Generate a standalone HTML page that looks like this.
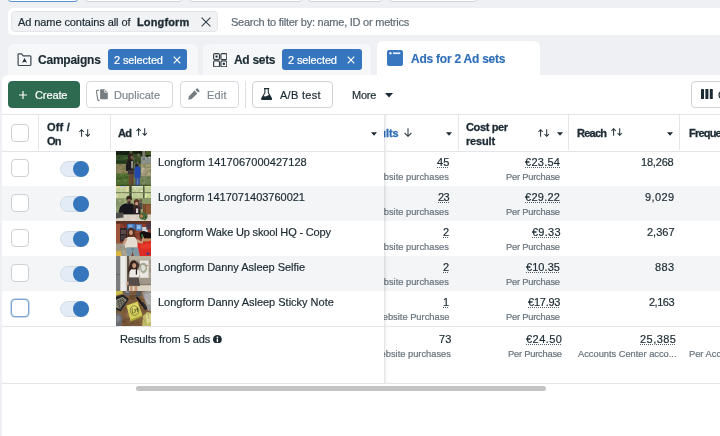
<!DOCTYPE html>
<html lang="en">
<head>
<meta charset="utf-8">
<title>Ads Manager</title>
<style>
*{box-sizing:border-box;margin:0;padding:0}
html,body{width:720px;height:436px;overflow:hidden}
body{position:relative;background:#eef0f4;font-family:"Liberation Sans",sans-serif;color:#1c2b33;font-size:11px}
.abs,svg{position:absolute}
.t{position:absolute;white-space:nowrap;line-height:1;z-index:5;-webkit-text-stroke:.2px currentColor;will-change:transform}
.du{text-decoration:underline dotted #55626b;text-decoration-thickness:1px;text-underline-offset:1px}
.topbtn{position:absolute;top:-21px;height:23px;background:#fff;border:1px solid #cfd3d8;border-radius:3px}
#fbar{left:8px;top:8px;width:730px;height:27px;background:#fff;border-radius:5px}
#chip{left:11px;top:11px;width:207px;height:21px;background:#f1f2f4;border:1px solid #e4e6ea;border-radius:4px}
.tab{position:absolute;top:44px;height:40px;border-radius:6px 6px 0 0;background:#f6f7f9}
.badge{position:absolute;top:49px;height:21px;background:#3676be;border-radius:3px}
#panel{left:2px;top:75px;width:730px;height:370px;background:#fff;border-radius:6px 0 0 0}
.btn{position:absolute;top:80.5px;height:27px;border-radius:4px;border:1px solid #d5d8dd;background:#fff}
.hl{position:absolute;height:1px;background:#e3e5e8;z-index:3}
.vl{position:absolute;width:1px;background:#e3e5e8}
.rowbg{position:absolute;left:2px;width:720px;height:35px;background:#f4f5f7}
.cb{position:absolute;left:11px;width:18px;height:18px;border:1px solid #cdd1d6;border-radius:4px;background:#fff;z-index:4}
.tg{position:absolute;left:60px;width:29px;height:16px;border-radius:8px;background:#e3ecf6;border:1px solid #d3dce6;z-index:4}
.tg i{position:absolute;right:-1px;top:-1px;width:16px;height:16px;border-radius:50%;background:#3576bc}
.th{position:absolute;left:116px;width:35px;height:35px;overflow:hidden;z-index:4}
#sticky{left:2px;top:115px;width:382px;height:268px;z-index:2}
#sticky div{position:absolute;left:0;width:382px}
#shadow{left:384px;top:115px;width:4px;height:268px;z-index:2;background:linear-gradient(90deg,rgba(0,0,0,.12),rgba(0,0,0,.05) 35%,rgba(0,0,0,0))}
.ic{z-index:5}
</style>
</head>
<body>
<div class="topbtn" style="left:8px;width:70px;border-color:#5b93d3"></div>
<div class="topbtn" style="left:85px;width:97px"></div>
<div class="topbtn" style="left:189px;width:113px"></div>
<div class="topbtn" style="left:308px;width:74px"></div>
<div class="topbtn" style="left:389px;width:88px"></div>

<div id="fbar" class="abs"></div>
<div id="chip" class="abs"></div>
<svg class="ic" style="left:201px;top:17px" width="10" height="10" viewBox="0 0 10 10"><path d="M.6 .6 L9.4 9.4 M9.4 .6 L.6 9.4" stroke="#303d45" stroke-width="1.05" fill="none"/></svg>

<div class="tab" style="left:8px;width:190px"></div>
<div class="tab" style="left:203px;width:168px"></div>
<div class="tab" style="left:377px;top:41px;width:163px;background:#fff"></div>
<div class="badge" style="left:107.5px;width:79.5px"></div>
<div class="badge" style="left:281.5px;width:80px"></div>
<!-- folder icon -->
<svg class="ic" style="left:17px;top:52.5px" width="15" height="14" viewBox="0 0 15 14"><path d="M1.9 .8 H4.6 L6.2 2.8 H13 Q13.9 2.8 13.9 3.7 V11.6 Q13.9 12.5 13 12.5 H2 Q1.1 12.5 1.1 11.6 V1.6 Q1.1 .8 1.9 .8Z" fill="none" stroke="#3b4850" stroke-width="1.2" stroke-linejoin="round"/><path d="M7.5 4.9 L10 9.8 L7.5 8.7 L5 9.8Z" fill="#1c2b33"/></svg>
<!-- badge x -->
<svg class="ic" style="left:172.6px;top:55.9px" width="8" height="8" viewBox="0 0 8 8"><path d="M.7 .7 L7.3 7.3 M7.3 .7 L.7 7.3" stroke="#fff" stroke-width="1.2"/></svg>
<svg class="ic" style="left:346.6px;top:55.9px" width="8" height="8" viewBox="0 0 8 8"><path d="M.7 .7 L7.3 7.3 M7.3 .7 L.7 7.3" stroke="#fff" stroke-width="1.2"/></svg>
<!-- ad sets icon -->
<svg class="ic" style="left:212.5px;top:53px" width="14.4" height="14.4" viewBox="0 0 14.4 14.4"><g fill="none" stroke="#333d44" stroke-width="1.15"><rect x=".6" y=".6" width="5.9" height="5.9" rx="1.3"/><rect x="7.9" y=".6" width="5.9" height="5.9" rx="1.3"/><rect x=".6" y="7.9" width="5.9" height="5.9" rx="1.3"/><rect x="7.9" y="7.9" width="5.9" height="5.9" rx="1.3"/></g><rect x="2.5" y="2.5" width="2.1" height="2.1" fill="#1c2b33"/><rect x="9.8" y="9.8" width="2.1" height="2.1" fill="#1c2b33"/></svg>
<!-- ads icon -->
<svg class="ic" style="left:387px;top:50px" width="16" height="16" viewBox="0 0 16 16"><rect width="16" height="16" rx="2" fill="#3877bf"/><rect x="2.4" y="2.2" width="2.1" height="2.1" fill="#fff"/><rect x="6" y="2.4" width="7.2" height="1.7" fill="#e4edf8"/></svg>

<div id="panel" class="abs"></div>

<!-- toolbar -->
<div class="btn" style="left:7.5px;width:72.5px;background:#2d6a4f;border-color:#2d6a4f"></div>
<svg class="ic" style="left:19px;top:90.5px" width="8" height="8" viewBox="0 0 8 8"><path d="M4 0 V8 M0 4 H8" stroke="#fff" stroke-width="1.2"/></svg>
<div class="btn" style="left:86.25px;width:86.5px"></div>
<svg class="ic" style="left:95.5px;top:88.8px" width="12" height="12" viewBox="0 0 12 12"><path d="M4.7 .3 H8.4 L11.8 3.6 V9.6 Q11.8 10.2 11.2 10.2 H4.7 Q4.1 10.2 4.1 9.6 V.9 Q4.1 .3 4.7 .3Z" fill="#757c82"/><path d="M8.7 .9 V3.3 H11.2" fill="none" stroke="#fff" stroke-width=".8"/><path d="M3 1.1 L.9 1.5 Q.3 1.7 .4 2.3 L1.8 10.8 Q2 11.5 2.7 11.4 L3.7 11.2" fill="none" stroke="#757c82" stroke-width="1.1"/></svg>
<div class="btn" style="left:180px;width:59px"></div>
<svg class="ic" style="left:188.4px;top:88.2px" width="12" height="12" viewBox="0 0 12 12"><path d="M.6 11.7 Q.2 11.7 .3 11.3 L.9 8.3 L6.6 2.6 L9.4 5.4 L3.7 11.1Z M7.4 1.8 L8.6 .6 Q9.1 .1 9.6 .6 L11.4 2.4 Q11.9 2.9 11.4 3.4 L10.2 4.6Z" fill="#757c82"/></svg>
<div class="vl" style="left:245px;top:81px;height:27px;background:#dcdfe3"></div>
<div class="btn" style="left:252px;width:81px;border-color:#cfd3d8"></div>
<svg class="ic" style="left:261px;top:88px" width="11.2" height="12.2" viewBox="0 0 11.2 12.2"><path d="M3 .6 H8.2 M3.9 .6 V4.7 L.8 10.3 Q.3 11.6 1.6 11.6 H9.6 Q10.9 11.6 10.4 10.3 L7.3 4.7 V.6" fill="none" stroke="#1c2b33" stroke-width="1.1" stroke-linejoin="round"/><path d="M2.3 7.9 L4.6 8.5 L8.4 6.7 L10.4 10.3 Q10.9 11.6 9.6 11.6 H1.6 Q.3 11.6 .8 10.3Z" fill="#1c2b33"/></svg>
<svg class="ic" style="left:385px;top:92.5px" width="8" height="5" viewBox="0 0 8 5"><path d="M0 0 H8 L4 4.6Z" fill="#1c2b33"/></svg>
<div class="btn" style="left:691px;width:60px;border-color:#cfd3d8"></div>
<svg class="ic" style="left:700.5px;top:89px" width="12" height="10" viewBox="0 0 12 10"><rect x="0" y="0" width="3" height="10" rx=".6" fill="#1c2b33"/><rect x="4.4" y="0" width="3" height="10" rx=".6" fill="#1c2b33"/><rect x="8.8" y="0" width="3" height="10" rx=".6" fill="#1c2b33"/></svg>

<!-- row backgrounds -->
<div class="rowbg" style="top:186px"></div>
<div class="rowbg" style="top:256px"></div>
<div class="hl" style="left:2px;top:114px;width:718px"></div>
<div class="hl" style="left:2px;top:150.5px;width:718px"></div>
<div class="hl" style="left:2px;top:326px;width:718px"></div>
<div class="hl" style="left:2px;top:383px;width:718px"></div>
<div class="vl" style="left:458px;top:115px;height:35px"></div>
<div class="vl" style="left:568px;top:115px;height:35px"></div>
<div class="vl" style="left:679px;top:115px;height:35px"></div>

<!-- sticky column overlay -->
<div id="sticky" class="abs">
<div style="top:0;height:35px;background:#fff"></div>
<div style="top:36px;height:35px;background:#fff"></div>
<div style="top:71px;height:35px;background:#f4f5f7"></div>
<div style="top:106px;height:35px;background:#fff"></div>
<div style="top:141px;height:35px;background:#f4f5f7"></div>
<div style="top:176px;height:35px;background:#fff"></div>
<div style="top:211px;height:57px;background:#fff"></div>
</div>
<div id="shadow" class="abs"></div>
<div class="vl" style="left:38px;top:115px;height:35px;z-index:4"></div>
<div class="vl" style="left:110px;top:115px;height:35px;z-index:4"></div>

<!-- header icons -->
<svg class="ic" style="left:78.9px;top:128.8px" width="11.4" height="8" viewBox="0 0 11.4 8"><path d="M2.6 7.7 V.7 M.4 3 L2.6 .7 L4.8 3 M8.7 .3 V7.3 M6.5 5 L8.7 7.3 L10.9 5" fill="none" stroke="#26343c" stroke-width="1.05"/></svg>
<svg class="ic" style="left:135.6px;top:128.2px" width="11.4" height="8" viewBox="0 0 11.4 8"><path d="M2.6 7.7 V.7 M.4 3 L2.6 .7 L4.8 3 M8.7 .3 V7.3 M6.5 5 L8.7 7.3 L10.9 5" fill="none" stroke="#26343c" stroke-width="1.05"/></svg>
<svg class="ic" style="left:538px;top:128.8px" width="11.4" height="8" viewBox="0 0 11.4 8"><path d="M2.6 7.7 V.7 M.4 3 L2.6 .7 L4.8 3 M8.7 .3 V7.3 M6.5 5 L8.7 7.3 L10.9 5" fill="none" stroke="#26343c" stroke-width="1.05"/></svg>
<svg class="ic" style="left:611.4px;top:128.2px" width="11.4" height="8" viewBox="0 0 11.4 8"><path d="M2.6 7.7 V.7 M.4 3 L2.6 .7 L4.8 3 M8.7 .3 V7.3 M6.5 5 L8.7 7.3 L10.9 5" fill="none" stroke="#26343c" stroke-width="1.05"/></svg>
<svg class="ic" style="left:371.2px;top:131.6px" width="6" height="4" viewBox="0 0 6 4"><path d="M0 .2 H6 L3 3.8Z" fill="#1c2b33"/></svg>
<svg class="ic" style="left:445.9px;top:131.6px" width="6" height="4" viewBox="0 0 6 4"><path d="M0 .2 H6 L3 3.8Z" fill="#1c2b33"/></svg>
<svg class="ic" style="left:556.7px;top:131.6px" width="6" height="4" viewBox="0 0 6 4"><path d="M0 .2 H6 L3 3.8Z" fill="#1c2b33"/></svg>
<svg class="ic" style="left:667.4px;top:131.6px" width="6" height="4" viewBox="0 0 6 4"><path d="M0 .2 H6 L3 3.8Z" fill="#1c2b33"/></svg>
<svg class="ic" style="left:404px;top:128px" width="8" height="9" viewBox="0 0 8 9"><path d="M4 .3 V8.3 M.6 5 L4 8.3 L7.4 5" fill="none" stroke="#36434b" stroke-width="1.1"/></svg>
<svg class="ic" style="left:213.2px;top:334.6px" width="8.8" height="8.8" viewBox="0 0 10 10"><circle cx="5" cy="5" r="5" fill="#1c2b33"/><rect x="4.2" y="4.2" width="1.6" height="3.8" fill="#fff"/><circle cx="5" cy="2.6" r="1" fill="#fff"/></svg>
<div class="cb" style="top:124px"></div>

<div class="cb" style="top:159px"></div>
<div class="tg" style="top:161px"><i></i></div>
<div class="th" style="top:151px"><svg width="35" height="35" viewBox="0 0 35 35" style="left:0;top:0"><defs><filter id="bl1" x="-10%" y="-10%" width="120%" height="120%"><feGaussianBlur stdDeviation="0.6"/></filter></defs><g filter="url(#bl1)"><rect x="-2" y="-2" width="39" height="39" fill="#56633c"/><rect x="-2" y="-2" width="39" height="7" fill="#182012"/><ellipse cx="4.7" cy="4.2" rx="1.3" ry="0.8" fill="#2e3c1e"/><ellipse cx="26.6" cy="2.4" rx="0.9" ry="0.7" fill="#2e3c1e"/><ellipse cx="1.0" cy="4.2" rx="0.9" ry="1.3" fill="#141a0e"/><ellipse cx="24.4" cy="1.3" rx="1.3" ry="1.1" fill="#141a0e"/><ellipse cx="31.5" cy="0.2" rx="0.5" ry="1.0" fill="#2e3c1e"/><ellipse cx="24.0" cy="4.8" rx="1.2" ry="1.0" fill="#2e3c1e"/><ellipse cx="32.9" cy="2.8" rx="0.8" ry="1.2" fill="#2e3c1e"/><ellipse cx="33.3" cy="4.6" rx="0.9" ry="1.4" fill="#141a0e"/><ellipse cx="6.5" cy="5.0" rx="1.4" ry="0.6" fill="#10150c"/><ellipse cx="31.3" cy="4.9" rx="1.0" ry="1.5" fill="#1c2614"/><ellipse cx="29.1" cy="3.4" rx="0.8" ry="1.1" fill="#2e3c1e"/><ellipse cx="29.6" cy="2.5" rx="1.1" ry="0.5" fill="#26341a"/><ellipse cx="26.0" cy="2.0" rx="1.2" ry="0.9" fill="#10150c"/><ellipse cx="3.0" cy="3.3" rx="0.6" ry="0.7" fill="#2e3c1e"/><ellipse cx="13.0" cy="3.7" rx="1.0" ry="0.8" fill="#1c2614"/><ellipse cx="20.8" cy="2.0" rx="0.7" ry="1.0" fill="#141a0e"/><ellipse cx="27.0" cy="2.7" rx="1.4" ry="0.7" fill="#1c2614"/><ellipse cx="12.0" cy="4.2" rx="0.9" ry="1.4" fill="#1c2614"/><ellipse cx="21.3" cy="3.6" rx="0.9" ry="1.4" fill="#1c2614"/><ellipse cx="28.3" cy="2.6" rx="1.1" ry="0.9" fill="#141a0e"/><ellipse cx="16.8" cy="1.8" rx="1.1" ry="1.4" fill="#2e3c1e"/><ellipse cx="17.0" cy="1.8" rx="0.8" ry="1.0" fill="#1c2614"/><rect x="13.6" y="0" width="2.6" height="3.4" fill="#4e6234"/><rect x="26.2" y="0" width="3.2" height="6" fill="#7e7a6a"/><rect x="30" y="0" width="5" height="4" fill="#465a2c"/><rect x="0" y="4" width="12" height="9" fill="#34502a"/><ellipse cx="11.5" cy="12.5" rx="0.6" ry="0.6" fill="#42602e"/><ellipse cx="8.8" cy="10.0" rx="0.8" ry="1.1" fill="#385428"/><ellipse cx="0.4" cy="10.1" rx="1.5" ry="1.1" fill="#385428"/><ellipse cx="11.4" cy="8.9" rx="0.9" ry="0.8" fill="#2c4622"/><ellipse cx="10.5" cy="7.3" rx="1.4" ry="1.4" fill="#4a6a34"/><ellipse cx="10.7" cy="8.7" rx="1.1" ry="0.7" fill="#2c4622"/><ellipse cx="2.1" cy="5.6" rx="1.0" ry="0.9" fill="#385428"/><ellipse cx="8.1" cy="5.6" rx="1.4" ry="1.3" fill="#385428"/><ellipse cx="10.9" cy="10.9" rx="1.3" ry="0.9" fill="#4a6a34"/><ellipse cx="1.9" cy="10.8" rx="1.2" ry="1.0" fill="#385428"/><ellipse cx="3.0" cy="6.5" rx="1.0" ry="1.0" fill="#26401e"/><ellipse cx="7.9" cy="8.1" rx="1.4" ry="0.9" fill="#385428"/><ellipse cx="8.7" cy="8.4" rx="0.7" ry="0.8" fill="#42602e"/><ellipse cx="10.5" cy="9.5" rx="1.3" ry="1.0" fill="#26401e"/><ellipse cx="11.5" cy="10.4" rx="1.0" ry="1.0" fill="#385428"/><ellipse cx="7.1" cy="6.8" rx="0.7" ry="1.0" fill="#385428"/><ellipse cx="10.6" cy="11.1" rx="0.8" ry="0.5" fill="#42602e"/><ellipse cx="12.0" cy="5.0" rx="1.1" ry="0.5" fill="#385428"/><ellipse cx="2.7" cy="11.9" rx="0.6" ry="1.0" fill="#26401e"/><ellipse cx="2.9" cy="5.9" rx="1.4" ry="0.9" fill="#2c4622"/><rect x="0" y="9.4" width="10.5" height="3" fill="#243a1c"/><rect x="17" y="3" width="8" height="10" fill="#3e4e2c"/><ellipse cx="18.9" cy="8.4" rx="0.9" ry="1.1" fill="#34442a"/><ellipse cx="21.8" cy="12.1" rx="1.0" ry="1.1" fill="#4e5e38"/><ellipse cx="25.0" cy="7.7" rx="1.3" ry="1.0" fill="#4e5e38"/><ellipse cx="18.9" cy="4.5" rx="1.4" ry="0.9" fill="#34442a"/><ellipse cx="22.4" cy="3.6" rx="1.3" ry="1.1" fill="#5e6a48"/><ellipse cx="23.2" cy="11.2" rx="0.8" ry="1.1" fill="#28361e"/><ellipse cx="22.7" cy="12.2" rx="0.9" ry="1.3" fill="#28361e"/><ellipse cx="24.7" cy="4.3" rx="0.9" ry="0.5" fill="#28361e"/><ellipse cx="18.7" cy="12.7" rx="0.9" ry="1.1" fill="#5e6a48"/><ellipse cx="20.4" cy="11.3" rx="1.1" ry="1.0" fill="#28361e"/><ellipse cx="21.7" cy="12.0" rx="1.2" ry="1.4" fill="#5e6a48"/><ellipse cx="24.9" cy="9.7" rx="0.7" ry="1.4" fill="#34442a"/><ellipse cx="22.7" cy="5.1" rx="1.3" ry="1.1" fill="#5e6a48"/><ellipse cx="18.0" cy="7.8" rx="1.1" ry="1.0" fill="#5e6a48"/><rect x="25" y="6" width="10.5" height="6.6" fill="#878e8c"/><ellipse cx="27.7" cy="7.1" rx="0.9" ry="0.7" fill="#a2a6a6"/><ellipse cx="25.7" cy="9.5" rx="0.8" ry="1.5" fill="#a2a6a6"/><ellipse cx="27.6" cy="9.5" rx="0.8" ry="0.7" fill="#a2a6a6"/><ellipse cx="28.0" cy="11.7" rx="0.5" ry="1.1" fill="#b2b6b6"/><ellipse cx="33.1" cy="7.6" rx="0.8" ry="1.1" fill="#b2b6b6"/><ellipse cx="26.3" cy="9.8" rx="1.2" ry="1.0" fill="#767e7c"/><ellipse cx="27.8" cy="8.0" rx="1.4" ry="1.3" fill="#6a726e"/><ellipse cx="33.5" cy="6.5" rx="0.8" ry="1.2" fill="#b2b6b6"/><ellipse cx="33.6" cy="9.3" rx="0.9" ry="1.1" fill="#8a9088"/><ellipse cx="29.8" cy="7.8" rx="0.8" ry="1.3" fill="#a2a6a6"/><ellipse cx="25.9" cy="9.9" rx="0.8" ry="1.0" fill="#8a9088"/><ellipse cx="32.2" cy="7.3" rx="1.2" ry="0.6" fill="#767e7c"/><rect x="0" y="13" width="12" height="9.6" fill="#84805a"/><ellipse cx="7.5" cy="20.1" rx="1.3" ry="1.4" fill="#a08a60"/><ellipse cx="7.8" cy="18.1" rx="1.3" ry="1.3" fill="#747448"/><ellipse cx="7.8" cy="21.6" rx="0.6" ry="1.0" fill="#747448"/><ellipse cx="4.6" cy="14.0" rx="0.7" ry="1.2" fill="#8a6a46"/><ellipse cx="3.4" cy="21.8" rx="1.3" ry="0.7" fill="#94845c"/><ellipse cx="1.7" cy="18.9" rx="0.6" ry="0.5" fill="#94845c"/><ellipse cx="2.5" cy="15.1" rx="1.5" ry="1.4" fill="#9a8a66"/><ellipse cx="3.8" cy="14.9" rx="1.4" ry="1.1" fill="#747448"/><ellipse cx="11.3" cy="19.6" rx="1.5" ry="1.4" fill="#9a8a66"/><ellipse cx="0.3" cy="17.0" rx="1.4" ry="0.8" fill="#9a8a66"/><ellipse cx="3.6" cy="18.8" rx="0.5" ry="1.2" fill="#9a8a66"/><ellipse cx="0.8" cy="16.4" rx="0.8" ry="1.2" fill="#747448"/><ellipse cx="5.8" cy="19.8" rx="0.6" ry="1.5" fill="#94845c"/><ellipse cx="11.4" cy="16.4" rx="0.9" ry="1.0" fill="#8a6a46"/><ellipse cx="4.4" cy="18.6" rx="0.5" ry="0.5" fill="#747448"/><ellipse cx="7.5" cy="22.2" rx="0.6" ry="0.7" fill="#8a6a46"/><ellipse cx="4.1" cy="16.4" rx="1.0" ry="1.3" fill="#94845c"/><ellipse cx="7.1" cy="20.5" rx="0.9" ry="0.8" fill="#8a6a46"/><ellipse cx="11.3" cy="13.9" rx="0.8" ry="1.1" fill="#747448"/><ellipse cx="4.1" cy="21.9" rx="1.0" ry="0.8" fill="#9a8a66"/><ellipse cx="3.7" cy="20.7" rx="1.1" ry="1.2" fill="#9a8a66"/><ellipse cx="12.0" cy="14.6" rx="0.5" ry="1.5" fill="#6a7440"/><ellipse cx="11.1" cy="13.3" rx="1.2" ry="0.8" fill="#9a8a66"/><ellipse cx="5.5" cy="17.0" rx="0.6" ry="1.4" fill="#94845c"/><rect x="24" y="12.6" width="12" height="13" fill="#a09a7a"/><ellipse cx="33.5" cy="23.3" rx="1.0" ry="0.8" fill="#b2aa8a"/><ellipse cx="25.7" cy="20.2" rx="1.5" ry="1.2" fill="#beb698"/><ellipse cx="33.2" cy="16.1" rx="1.3" ry="1.2" fill="#888a5e"/><ellipse cx="34.9" cy="19.6" rx="0.6" ry="1.1" fill="#7e8458"/><ellipse cx="33.7" cy="16.1" rx="1.3" ry="1.2" fill="#888a5e"/><ellipse cx="28.0" cy="13.8" rx="1.3" ry="1.3" fill="#888a5e"/><ellipse cx="32.4" cy="22.4" rx="1.2" ry="1.3" fill="#b2aa8a"/><ellipse cx="35.4" cy="20.3" rx="0.7" ry="1.2" fill="#beb698"/><ellipse cx="29.8" cy="23.4" rx="0.7" ry="1.1" fill="#7e8458"/><ellipse cx="34.7" cy="19.1" rx="1.4" ry="1.1" fill="#94906a"/><ellipse cx="31.2" cy="16.6" rx="1.1" ry="0.6" fill="#7e8458"/><ellipse cx="30.3" cy="14.1" rx="1.2" ry="0.8" fill="#94906a"/><ellipse cx="28.6" cy="15.5" rx="1.1" ry="1.3" fill="#7e8458"/><ellipse cx="30.3" cy="15.1" rx="0.7" ry="1.1" fill="#aaa280"/><ellipse cx="34.9" cy="20.7" rx="0.8" ry="0.9" fill="#888a5e"/><ellipse cx="27.5" cy="21.4" rx="1.0" ry="0.7" fill="#aaa280"/><ellipse cx="33.0" cy="17.8" rx="1.5" ry="0.7" fill="#b2aa8a"/><ellipse cx="34.7" cy="21.3" rx="1.4" ry="0.9" fill="#888a5e"/><ellipse cx="33.6" cy="19.3" rx="1.0" ry="1.2" fill="#888a5e"/><ellipse cx="35.3" cy="15.1" rx="1.2" ry="1.0" fill="#7e8458"/><ellipse cx="33.4" cy="14.8" rx="0.5" ry="0.6" fill="#aaa280"/><ellipse cx="33.6" cy="15.0" rx="1.0" ry="0.8" fill="#aaa280"/><ellipse cx="27.1" cy="17.9" rx="1.4" ry="1.1" fill="#beb698"/><ellipse cx="31.2" cy="21.1" rx="1.0" ry="1.2" fill="#888a5e"/><rect x="0" y="22.6" width="13" height="12.4" fill="#506c30"/><ellipse cx="4.2" cy="24.5" rx="1.2" ry="0.6" fill="#6a8844"/><ellipse cx="1.2" cy="29.8" rx="1.4" ry="0.7" fill="#46622a"/><ellipse cx="5.6" cy="23.5" rx="0.6" ry="0.9" fill="#6a8844"/><ellipse cx="1.6" cy="25.4" rx="1.1" ry="1.4" fill="#6a8844"/><ellipse cx="7.6" cy="23.2" rx="0.7" ry="1.1" fill="#5e7e3a"/><ellipse cx="3.8" cy="24.4" rx="0.6" ry="0.8" fill="#405c28"/><ellipse cx="2.3" cy="29.8" rx="1.1" ry="0.9" fill="#6a8844"/><ellipse cx="9.3" cy="29.6" rx="1.1" ry="1.0" fill="#6a8844"/><ellipse cx="5.6" cy="26.5" rx="1.1" ry="1.0" fill="#527234"/><ellipse cx="3.2" cy="24.8" rx="1.3" ry="0.6" fill="#527234"/><ellipse cx="6.8" cy="33.5" rx="1.2" ry="0.8" fill="#46622a"/><ellipse cx="1.5" cy="27.8" rx="1.3" ry="0.7" fill="#3c5826"/><ellipse cx="5.5" cy="34.5" rx="0.6" ry="1.1" fill="#527234"/><ellipse cx="4.4" cy="26.9" rx="1.0" ry="1.3" fill="#46622a"/><ellipse cx="10.9" cy="34.3" rx="1.0" ry="1.2" fill="#46622a"/><ellipse cx="9.5" cy="26.4" rx="1.1" ry="1.2" fill="#3c5826"/><ellipse cx="3.7" cy="27.4" rx="1.2" ry="0.5" fill="#3c5826"/><ellipse cx="4.6" cy="30.2" rx="1.0" ry="0.7" fill="#527234"/><ellipse cx="1.7" cy="25.7" rx="0.9" ry="1.4" fill="#46622a"/><ellipse cx="2.2" cy="27.6" rx="0.8" ry="0.6" fill="#3c5826"/><ellipse cx="11.2" cy="26.1" rx="0.9" ry="0.9" fill="#3c5826"/><ellipse cx="12.5" cy="24.5" rx="0.7" ry="0.7" fill="#5e7e3a"/><ellipse cx="0.2" cy="32.9" rx="0.7" ry="0.8" fill="#5e7e3a"/><ellipse cx="5.4" cy="27.2" rx="1.1" ry="1.5" fill="#405c28"/><rect x="17" y="13" width="8" height="22" fill="#606c44"/><ellipse cx="20.7" cy="21.2" rx="0.6" ry="1.4" fill="#56623c"/><ellipse cx="19.7" cy="23.2" rx="1.1" ry="0.8" fill="#4e5a36"/><ellipse cx="22.6" cy="29.0" rx="0.7" ry="1.4" fill="#4e5a36"/><ellipse cx="20.4" cy="16.7" rx="0.6" ry="0.6" fill="#4e5a36"/><ellipse cx="17.5" cy="28.1" rx="1.3" ry="1.4" fill="#6a764c"/><ellipse cx="18.6" cy="17.9" rx="1.3" ry="1.4" fill="#6a764c"/><ellipse cx="24.3" cy="21.7" rx="0.8" ry="0.5" fill="#4e5a36"/><ellipse cx="24.1" cy="32.3" rx="0.6" ry="0.9" fill="#6a764c"/><ellipse cx="18.1" cy="18.2" rx="1.2" ry="1.4" fill="#4e5a36"/><ellipse cx="17.0" cy="29.8" rx="0.7" ry="1.4" fill="#6a764c"/><rect x="24" y="25.6" width="12" height="9.4" fill="#6e7e54"/><ellipse cx="26.7" cy="34.6" rx="0.6" ry="1.2" fill="#62744a"/><ellipse cx="25.6" cy="33.2" rx="1.0" ry="0.9" fill="#62744a"/><ellipse cx="29.5" cy="29.9" rx="1.0" ry="0.7" fill="#8a9870"/><ellipse cx="25.1" cy="27.8" rx="0.5" ry="0.8" fill="#8a9870"/><ellipse cx="29.7" cy="34.2" rx="1.2" ry="1.2" fill="#62744a"/><ellipse cx="35.9" cy="26.2" rx="1.1" ry="0.9" fill="#62744a"/><ellipse cx="28.1" cy="32.1" rx="1.0" ry="1.1" fill="#7e8c64"/><ellipse cx="31.0" cy="26.9" rx="0.6" ry="1.4" fill="#8a9870"/><ellipse cx="32.4" cy="27.0" rx="1.4" ry="1.0" fill="#5a6c44"/><ellipse cx="34.6" cy="28.3" rx="0.9" ry="1.4" fill="#7e8c64"/><ellipse cx="25.9" cy="31.3" rx="1.0" ry="0.8" fill="#728252"/><ellipse cx="35.4" cy="33.5" rx="1.0" ry="0.7" fill="#7e8c64"/><ellipse cx="28.3" cy="28.3" rx="1.2" ry="1.3" fill="#5a6c44"/><ellipse cx="35.0" cy="30.7" rx="0.8" ry="1.4" fill="#728252"/><ellipse cx="28.1" cy="28.1" rx="0.9" ry="0.9" fill="#8a9870"/><ellipse cx="26.1" cy="29.3" rx="0.7" ry="1.2" fill="#62744a"/><ellipse cx="26.4" cy="32.8" rx="0.8" ry="0.5" fill="#8a9870"/><ellipse cx="28.1" cy="27.2" rx="0.9" ry="0.7" fill="#8a9870"/><ellipse cx="14.4" cy="5.8" rx="2.6" ry="3.5" fill="#2e211a"/><path d="M12 6 Q11 10 12 13 L14 9Z" fill="#2e211a"/><ellipse cx="15.9" cy="6.2" rx="1.1" ry="1.7" fill="#86604c"/><path d="M10 20 Q9.2 11.4 12.4 9 H16.8 Q17.8 12 17.4 20Z" fill="#1f1d1a"/><rect x="15.3" y="10" width="1.5" height="7.4" fill="#b4b0ac"/><path d="M11.8 19 H17.8 L18 23.4 H12Z" fill="#3e3436"/><rect x="12.8" y="23" width="2" height="11" fill="#6e4a32"/><rect x="15.4" y="23" width="1.9" height="11" fill="#60402a"/><ellipse cx="20.8" cy="14.4" rx="1.8" ry="1.7" fill="#261c2a"/><path d="M18.6 27 V17.4 Q18.8 15.6 20.6 15.6 H22.6 Q24.4 15.8 24.4 17.6 V27Z" fill="#2247ae"/><rect x="19.6" y="26.6" width="4.2" height="8" fill="#3a58a0"/><rect x="21.4" y="28.4" width=".7" height="6" fill="#7e94c0"/><rect x="-1" y="33.8" width="37" height="2.2" fill="#2e3a20" opacity=".6"/></g></svg></div>
<div class="cb" style="top:194px"></div>
<div class="tg" style="top:196px"><i></i></div>
<div class="th" style="top:186px"><svg width="35" height="35" viewBox="0 0 35 35" style="left:0;top:0"><defs><filter id="bl2" x="-10%" y="-10%" width="120%" height="120%"><feGaussianBlur stdDeviation="0.6"/></filter></defs><g filter="url(#bl2)"><rect x="-2" y="-2" width="39" height="39" fill="#98a672"/><rect x="0" y="0" width="35" height="12" fill="#bfcc96"/><ellipse cx="5.9" cy="6.6" rx="1.4" ry="1.0" fill="#e6e2c0"/><ellipse cx="11.1" cy="2.9" rx="1.3" ry="1.0" fill="#e6e2c0"/><ellipse cx="10.3" cy="1.9" rx="0.8" ry="0.6" fill="#d4c890"/><ellipse cx="8.2" cy="7.0" rx="0.9" ry="1.0" fill="#d4c890"/><ellipse cx="8.0" cy="2.6" rx="0.5" ry="1.0" fill="#d8d8a6"/><ellipse cx="0.5" cy="9.8" rx="1.1" ry="1.3" fill="#e2dcae"/><ellipse cx="5.7" cy="9.4" rx="1.0" ry="1.1" fill="#c4d090"/><ellipse cx="0.1" cy="1.8" rx="1.2" ry="0.9" fill="#e6e2c0"/><ellipse cx="12.9" cy="9.4" rx="1.2" ry="0.8" fill="#b4c884"/><ellipse cx="6.7" cy="1.3" rx="1.1" ry="0.6" fill="#d8d8a6"/><ellipse cx="11.0" cy="4.9" rx="1.5" ry="1.3" fill="#d8d8a6"/><ellipse cx="2.8" cy="10.3" rx="0.6" ry="0.9" fill="#d4c890"/><ellipse cx="5.2" cy="1.7" rx="1.1" ry="1.3" fill="#e2dcae"/><ellipse cx="4.4" cy="4.1" rx="0.5" ry="0.9" fill="#d8d8a6"/><ellipse cx="1.7" cy="8.1" rx="0.5" ry="1.0" fill="#c4d090"/><ellipse cx="2.3" cy="6.6" rx="0.9" ry="0.7" fill="#d4c890"/><ellipse cx="20.7" cy="6.9" rx="1.2" ry="0.6" fill="#e0e8d0"/><ellipse cx="26.0" cy="5.3" rx="1.1" ry="1.0" fill="#d0dcae"/><ellipse cx="21.6" cy="7.0" rx="0.6" ry="0.9" fill="#d0dcae"/><ellipse cx="19.4" cy="2.9" rx="1.1" ry="0.7" fill="#eceee0"/><ellipse cx="22.8" cy="8.2" rx="0.6" ry="1.4" fill="#d0dcae"/><ellipse cx="16.9" cy="9.9" rx="1.4" ry="0.6" fill="#c0d09a"/><ellipse cx="25.7" cy="5.9" rx="1.4" ry="1.1" fill="#e0e8d0"/><ellipse cx="21.6" cy="5.6" rx="0.6" ry="1.1" fill="#c0d09a"/><ellipse cx="20.8" cy="4.5" rx="0.5" ry="1.2" fill="#d0dcae"/><ellipse cx="25.8" cy="7.0" rx="0.9" ry="0.9" fill="#c0d09a"/><ellipse cx="22.7" cy="2.0" rx="0.7" ry="0.9" fill="#d0dcae"/><ellipse cx="16.3" cy="8.4" rx="0.9" ry="1.0" fill="#d0dcae"/><ellipse cx="30.6" cy="9.5" rx="1.2" ry="1.3" fill="#dce6a8"/><ellipse cx="32.9" cy="9.3" rx="1.4" ry="1.1" fill="#dce6a8"/><ellipse cx="29.8" cy="7.8" rx="0.7" ry="0.8" fill="#e4eab8"/><ellipse cx="29.8" cy="9.5" rx="1.5" ry="1.5" fill="#dce6a8"/><ellipse cx="29.5" cy="10.7" rx="1.4" ry="0.8" fill="#e4eab8"/><ellipse cx="33.5" cy="12.4" rx="1.3" ry="0.8" fill="#dce6a8"/><ellipse cx="31.9" cy="10.3" rx="1.1" ry="0.9" fill="#b8cc78"/><ellipse cx="34.3" cy="9.0" rx="1.2" ry="0.8" fill="#b8cc78"/><rect x="13.3" y="0" width="2.4" height="14" fill="#434a32"/><rect x="27" y="0" width="1.6" height="16" fill="#566040"/><rect x="0" y="-1" width="13" height="2.6" fill="#e6d894"/><rect x="4" y="-1" width="6" height="2.2" fill="#a8c8e0"/><rect x="16" y="-1" width="11" height="2.4" fill="#dfe6cc"/><rect x="28.6" y="-1" width="7" height="2.4" fill="#cfdc98"/><rect x="0" y="6.2" width="35" height=".9" fill="#6a7650"/><rect x="0" y="13" width="8" height="14" fill="#869668"/><ellipse cx="0.9" cy="22.8" rx="1.2" ry="1.4" fill="#a4b084"/><ellipse cx="5.9" cy="17.1" rx="0.6" ry="0.9" fill="#6c7a52"/><ellipse cx="5.5" cy="18.6" rx="1.3" ry="0.6" fill="#94a474"/><ellipse cx="7.0" cy="17.4" rx="1.3" ry="0.9" fill="#94a474"/><ellipse cx="1.3" cy="22.3" rx="0.8" ry="0.5" fill="#7a8a5e"/><ellipse cx="1.0" cy="17.7" rx="0.6" ry="0.7" fill="#6c7a52"/><ellipse cx="3.2" cy="26.9" rx="0.9" ry="1.1" fill="#7a8a5e"/><ellipse cx="4.6" cy="21.9" rx="0.9" ry="1.4" fill="#6c7a52"/><ellipse cx="4.1" cy="15.7" rx="1.0" ry="0.7" fill="#a4b084"/><ellipse cx="4.0" cy="14.4" rx="1.3" ry="0.6" fill="#a4b084"/><rect x="24" y="12" width="11" height="8" fill="#8a9666"/><path d="M26.5 18 H35 V29 H27Z" fill="#7a4a2c"/><rect x="30" y="19" width="5" height="9" fill="#8e5a36"/><ellipse cx="24.6" cy="15" rx="1.5" ry="2" fill="#6a5a4a"/><rect x="23" y="17" width="3.4" height="6" fill="#4a4a48"/><ellipse cx="13" cy="12.6" rx="2.7" ry="2.8" fill="#33261f"/><ellipse cx="13" cy="14.8" rx="1.9" ry="2.1" fill="#8a6a58"/><ellipse cx="13" cy="16.6" rx="1.7" ry="1.3" fill="#3a2c26"/><path d="M2.6 29 Q2.6 18.5 9 17.4 H16.4 Q19.4 18.5 19 29Z" fill="#15171a"/><ellipse cx="20.6" cy="16.6" rx="2.7" ry="3.5" fill="#5a3224"/><ellipse cx="20.6" cy="17.6" rx="1.5" ry="1.9" fill="#c49a84"/><path d="M17.6 29 V21.5 Q18 18.5 21 19.5 Q24.6 19.5 24.6 23.5 V29Z" fill="#2a2224"/><path d="M18.2 18 Q17 22 18 25 L19.4 20Z M23 18 Q24.2 22 23.4 25 L22 20Z" fill="#5a3224"/><rect x="20" y="22.5" width="2.2" height="4.5" fill="#d8d0cc"/><rect x="-1" y="28.4" width="37" height="8" fill="#d9d1c4"/><ellipse cx="23.4" cy="29.1" rx="1.2" ry="0.7" fill="#e4dcd0"/><ellipse cx="8.3" cy="33.4" rx="1.2" ry="1.4" fill="#cfc6b8"/><ellipse cx="11.8" cy="30.7" rx="1.2" ry="0.8" fill="#cfc6b8"/><ellipse cx="13.5" cy="33.7" rx="0.7" ry="0.9" fill="#cfc6b8"/><ellipse cx="11.6" cy="33.6" rx="1.0" ry="0.7" fill="#cfc6b8"/><ellipse cx="21.5" cy="31.4" rx="1.0" ry="1.3" fill="#cfc6b8"/><ellipse cx="17.1" cy="33.7" rx="1.1" ry="0.9" fill="#e4dcd0"/><ellipse cx="15.8" cy="33.7" rx="0.5" ry="0.6" fill="#e4dcd0"/><path d="M0 27 L7 26.4 L7.6 31.5 L0 32.5Z" fill="#4e4e4c"/><ellipse cx="27.4" cy="30.2" rx="4.2" ry="3.6" fill="#48683a"/><ellipse cx="26.5" cy="30.4" rx="0.9" ry="0.9" fill="#5a7a44"/><ellipse cx="30.0" cy="31.8" rx="0.8" ry="0.8" fill="#5a7a44"/><ellipse cx="26.1" cy="29.5" rx="0.7" ry="1.1" fill="#5a7a44"/><ellipse cx="24.2" cy="28.8" rx="1.0" ry="0.6" fill="#3c5a30"/><ellipse cx="29.7" cy="31.5" rx="0.6" ry="0.9" fill="#2e4826"/><ellipse cx="28.9" cy="33.4" rx="1.1" ry="0.9" fill="#5a7a44"/><ellipse cx="25.4" cy="30" rx="1.6" ry="1.5" fill="#cc7a4a"/></g></svg></div>
<div class="cb" style="top:229px"></div>
<div class="tg" style="top:231px"><i></i></div>
<div class="th" style="top:221px"><svg width="35" height="35" viewBox="0 0 35 35" style="left:0;top:0"><defs><filter id="bl3" x="-10%" y="-10%" width="120%" height="120%"><feGaussianBlur stdDeviation="0.6"/></filter></defs><g filter="url(#bl3)"><rect x="-2" y="-2" width="39" height="39" fill="#8a3e2c"/><ellipse cx="5.8" cy="13.8" rx="1.9" ry="1.7" fill="#964a34"/><ellipse cx="34.6" cy="9.5" rx="2.3" ry="1.3" fill="#a0563c"/><ellipse cx="8.3" cy="0.1" rx="1.5" ry="1.8" fill="#7e3626"/><ellipse cx="5.1" cy="15.0" rx="2.3" ry="2.0" fill="#743224"/><ellipse cx="34.9" cy="14.8" rx="2.2" ry="1.9" fill="#7e3626"/><ellipse cx="33.5" cy="10.8" rx="2.0" ry="1.9" fill="#8a4230"/><ellipse cx="0.8" cy="14.8" rx="1.1" ry="2.1" fill="#7e3626"/><ellipse cx="15.9" cy="11.0" rx="1.5" ry="1.7" fill="#964a34"/><ellipse cx="23.3" cy="9.4" rx="2.1" ry="1.1" fill="#964a34"/><ellipse cx="7.3" cy="19.4" rx="2.3" ry="2.1" fill="#a0563c"/><ellipse cx="34.6" cy="1.4" rx="1.8" ry="1.8" fill="#743224"/><ellipse cx="7.0" cy="18.5" rx="2.2" ry="1.6" fill="#8a4230"/><ellipse cx="33.4" cy="10.0" rx="1.4" ry="1.7" fill="#8a4230"/><ellipse cx="0.9" cy="1.9" rx="2.0" ry="2.4" fill="#743224"/><ellipse cx="0.1" cy="1.4" rx="1.8" ry="1.7" fill="#a0563c"/><ellipse cx="21.3" cy="11.1" rx="1.9" ry="1.3" fill="#964a34"/><ellipse cx="21.9" cy="16.7" rx="1.5" ry="2.1" fill="#8a4230"/><ellipse cx="8.6" cy="3.4" rx="2.3" ry="1.2" fill="#743224"/><ellipse cx="13.1" cy="13.7" rx="1.9" ry="2.3" fill="#964a34"/><ellipse cx="14.2" cy="19.8" rx="2.3" ry="1.8" fill="#8a4230"/><ellipse cx="17.2" cy="7.5" rx="1.3" ry="2.2" fill="#964a34"/><ellipse cx="19.7" cy="8.8" rx="1.6" ry="2.0" fill="#7e3626"/><ellipse cx="29.3" cy="1.0" rx="1.4" ry="1.4" fill="#743224"/><ellipse cx="8.7" cy="7.9" rx="2.2" ry="1.9" fill="#964a34"/><ellipse cx="34.4" cy="14.9" rx="1.7" ry="1.4" fill="#a0563c"/><ellipse cx="31.9" cy="9.6" rx="2.3" ry="2.3" fill="#8a4230"/><ellipse cx="27.8" cy="17.6" rx="1.8" ry="1.6" fill="#a0563c"/><ellipse cx="31.6" cy="9.5" rx="1.2" ry="1.8" fill="#964a34"/><ellipse cx="26.9" cy="0.2" rx="2.0" ry="2.3" fill="#7e3626"/><ellipse cx="9.3" cy="6.5" rx="1.3" ry="2.3" fill="#743224"/><rect x="0" y="0" width="35" height="2.6" fill="#5e3024"/><rect x="0" y="3" width="4" height="20" fill="#9a543a"/><rect x="4" y="7" width="7" height="13.5" fill="#33262a"/><rect x="5" y="9" width="5" height="4" fill="#5a4c4a"/><rect x="5" y="14.5" width="5" height="4" fill="#463a3a"/><rect x="10.8" y="2.4" width="8.8" height="6.8" fill="#2a3f66"/><rect x="11.4" y="3" width="7.6" height="5.6" fill="#3f73b8"/><rect x="12.4" y="3.6" width="4" height="3" fill="#7aa8dc"/><rect x="19.8" y="3.4" width="6" height="6.2" fill="#4a86c8"/><rect x="21" y="4.4" width="3.6" height="3.6" fill="#96bce4"/><rect x="26.2" y="6" width="5.4" height="5.2" fill="#cdd0d4"/><rect x="30.4" y="2" width="4.6" height="6.6" fill="#503844"/><path d="M23.6 12 Q27 8.4 30.4 11 L35.5 12 V17.4 H24.6Z" fill="#120f0e"/><path d="M26.6 17.4 H35.5 V21 L27 20.6Z" fill="#c08c5a"/><rect x="0" y="22.5" width="12" height="13" fill="#9c9686"/><ellipse cx="10.5" cy="24.7" rx="0.5" ry="1.5" fill="#8e8878"/><ellipse cx="7.7" cy="31.9" rx="1.4" ry="1.3" fill="#a8a292"/><ellipse cx="2.5" cy="34.5" rx="0.8" ry="1.1" fill="#968e7c"/><ellipse cx="7.8" cy="23.6" rx="1.4" ry="1.1" fill="#b4ae9e"/><ellipse cx="4.6" cy="25.2" rx="0.6" ry="1.0" fill="#a8a292"/><ellipse cx="7.7" cy="30.3" rx="0.8" ry="1.5" fill="#b4ae9e"/><ellipse cx="9.9" cy="33.4" rx="1.5" ry="1.0" fill="#b4ae9e"/><ellipse cx="9.1" cy="31.0" rx="0.7" ry="0.5" fill="#a8a292"/><ellipse cx="4.6" cy="26.0" rx="0.8" ry="1.4" fill="#968e7c"/><ellipse cx="7.3" cy="34.0" rx="0.8" ry="0.9" fill="#a8a292"/><path d="M0 30.5 L4.6 29.6 L6 35.5 H0Z" fill="#dcb440"/><path d="M20.6 22.4 L35.5 19.4 V35.5 H20.6Z" fill="#dd2a20"/><path d="M24 24 L35.5 22 V27 L25 28Z" fill="#e63a2c"/><g transform="translate(1,.4)"><ellipse cx="14" cy="10.6" rx="3.5" ry="4.3" fill="#47291e"/><ellipse cx="14" cy="11.2" rx="2" ry="2.6" fill="#c8947a"/><path d="M10.6 12 Q9 20 11 24.4 L12.6 14Z M17.4 12 Q20 19 21.6 23.4 L17 15Z" fill="#47291e"/><path d="M8 26.4 Q7 17.4 11 15.6 H17.6 Q21 17.4 20.6 26.4Z" fill="#e4dccf"/><path d="M5.6 21.4 L8.4 16.6 L10.4 18 L7.8 23.4Z" fill="#c89a80"/><path d="M20 17.4 L24.4 20 L26 15 L27 15.5 L25.6 22.4 L20 21.4Z" fill="#c89a80"/><path d="M9.4 26 H21 L23 35.5 H17 L15.5 30 L14 35.5 H10Z" fill="#8299a4"/><rect x="14.6" y="26.4" width="2.4" height="2.4" fill="#6a8290"/></g><rect x="25.4" y="13.4" width="1.6" height="3" fill="#3a8a3a"/><ellipse cx="32" cy="32.6" rx="1.6" ry="1.2" fill="#3a3a8a"/></g></svg></div>
<div class="cb" style="top:264px"></div>
<div class="tg" style="top:266px"><i></i></div>
<div class="th" style="top:256px"><svg width="35" height="35" viewBox="0 0 35 35" style="left:0;top:0"><defs><filter id="bl4" x="-10%" y="-10%" width="120%" height="120%"><feGaussianBlur stdDeviation="0.6"/></filter></defs><g filter="url(#bl4)"><rect x="-2" y="-2" width="39" height="39" fill="#aca392"/><ellipse cx="13.3" cy="3.4" rx="1.7" ry="2.2" fill="#a49b8a"/><ellipse cx="33.9" cy="16.1" rx="2.2" ry="1.4" fill="#b4ab9a"/><ellipse cx="27.6" cy="4.1" rx="1.9" ry="1.8" fill="#9e9584"/><ellipse cx="17.5" cy="17.8" rx="1.4" ry="2.3" fill="#9e9584"/><ellipse cx="20.5" cy="6.2" rx="1.7" ry="2.0" fill="#a49b8a"/><ellipse cx="17.6" cy="6.5" rx="2.0" ry="2.0" fill="#b4ab9a"/><ellipse cx="31.5" cy="10.7" rx="1.5" ry="2.4" fill="#9e9584"/><ellipse cx="13.7" cy="22.1" rx="2.4" ry="2.1" fill="#a49b8a"/><ellipse cx="17.6" cy="13.0" rx="1.7" ry="1.7" fill="#a49b8a"/><ellipse cx="23.6" cy="7.9" rx="1.6" ry="2.0" fill="#9e9584"/><ellipse cx="27.2" cy="25.1" rx="2.5" ry="2.6" fill="#b4ab9a"/><ellipse cx="30.4" cy="9.2" rx="1.4" ry="2.1" fill="#bab2a2"/><ellipse cx="15.1" cy="5.8" rx="2.5" ry="2.0" fill="#b4ab9a"/><ellipse cx="27.7" cy="8.5" rx="1.6" ry="2.4" fill="#a49b8a"/><ellipse cx="15.5" cy="6.1" rx="1.7" ry="1.8" fill="#b4ab9a"/><ellipse cx="25.4" cy="3.5" rx="1.3" ry="2.6" fill="#b4ab9a"/><ellipse cx="34.1" cy="6.0" rx="1.4" ry="2.6" fill="#a49b8a"/><ellipse cx="23.5" cy="14.9" rx="2.3" ry="1.6" fill="#bab2a2"/><ellipse cx="34.6" cy="14.7" rx="2.0" ry="2.4" fill="#9e9584"/><ellipse cx="16.0" cy="21.8" rx="2.2" ry="2.6" fill="#b4ab9a"/><ellipse cx="18.6" cy="23.0" rx="2.6" ry="1.7" fill="#b4ab9a"/><ellipse cx="15.1" cy="17.5" rx="1.8" ry="2.6" fill="#a49b8a"/><rect x="-1" y="-1" width="5.4" height="37" fill="#7c7c7c"/><rect x="0" y="18" width="4" height=".8" fill="#5e5e5e"/><rect x="4.4" y="-1" width="6.8" height="37" fill="#ebebea"/><rect x="9.4" y="-1" width="1.6" height="37" fill="#d4d4d2"/><rect x="11" y="-1" width="2.4" height="37" fill="#665444"/><rect x="13" y="0" width="22.5" height="3.6" fill="#bab09e"/><rect x="23.8" y="4.4" width="8.8" height="17.4" fill="#e8e7e2"/><path d="M24 8 Q29 4.6 31 10 Q32 16 27 17.4 Q23 15 24 8Z" fill="#a4aa92"/><path d="M25.2 9.6 Q28 8 29.6 11 Q29.6 14.6 27 15.2 Q24.6 13.6 25.2 9.6Z" fill="#dededa"/><ellipse cx="31" cy="9.6" rx=".7" ry=".7" fill="#d04040"/><rect x="13" y="29" width="22.5" height="7" fill="#dbd4c4"/><rect x="23.6" y="22" width="12" height="7" fill="#a0968a"/><rect x="23.6" y="28.2" width="12" height="1" fill="#7e7468"/><ellipse cx="17.6" cy="9" rx="3.9" ry="4.7" fill="#35221f"/><path d="M13.2 9 Q11.4 15 13 19.4 L15.6 12Z" fill="#35221f"/><path d="M21 9 Q22.4 13 21.6 16 L19.6 12Z" fill="#35221f"/><ellipse cx="18.2" cy="9.6" rx="2" ry="2.6" fill="#c8987c"/><path d="M20.8 5.6 L23.6 8.4 L22.6 12 L20.4 11Z" fill="#4a3430"/><path d="M13.4 21.6 V16 Q14 13.6 17 13.6 H21.6 Q24 15 23.6 19 L22.2 21.6Z" fill="#edeae6"/><rect x="19.8" y="12.6" width="1.3" height="6" fill="#262222"/><path d="M11.4 30 L13 21.4 H22.6 L24.2 30Z" fill="#58504c"/><path d="M14 23 L13 29.6 M16.4 22.6 L16 29.8 M19 22.6 L19.6 29.8 M21.4 23 L22.6 29.6" stroke="#463e3a" stroke-width=".5"/><rect x="10.6" y="25.6" width="2" height="3.6" fill="#c8987c"/><rect x="14" y="29.8" width="2.7" height="6" fill="#cc9c7e"/><rect x="18.6" y="29.8" width="2.7" height="6" fill="#c49474"/></g></svg></div>
<div class="cb" style="top:299px;border-color:#7aa4d6;box-shadow:0 0 0 .5px #8fb2dc"></div>
<div class="tg" style="top:301px"><i></i></div>
<div class="th" style="top:291px"><svg width="35" height="35" viewBox="0 0 35 35" style="left:0;top:0"><defs><filter id="bl5" x="-10%" y="-10%" width="120%" height="120%"><feGaussianBlur stdDeviation="0.6"/></filter></defs><g filter="url(#bl5)"><rect x="-2" y="-2" width="39" height="39" fill="#7a5a3a"/><ellipse cx="13.3" cy="8.1" rx="1.3" ry="2.8" fill="#7f5e3c"/><ellipse cx="31.4" cy="9.9" rx="1.6" ry="2.7" fill="#7f5e3c"/><ellipse cx="0.3" cy="8.7" rx="3.0" ry="1.0" fill="#6e5032"/><ellipse cx="34.5" cy="34.3" rx="1.6" ry="1.5" fill="#664a2e"/><ellipse cx="21.7" cy="2.1" rx="2.6" ry="1.1" fill="#8c6a46"/><ellipse cx="29.4" cy="7.6" rx="2.5" ry="2.5" fill="#6e5032"/><ellipse cx="19.4" cy="0.6" rx="1.2" ry="1.3" fill="#6e5032"/><ellipse cx="1.9" cy="11.1" rx="2.2" ry="2.2" fill="#6e5032"/><ellipse cx="15.2" cy="27.9" rx="1.1" ry="1.8" fill="#84623f"/><ellipse cx="23.4" cy="14.3" rx="2.3" ry="2.0" fill="#735436"/><ellipse cx="8.1" cy="3.0" rx="1.2" ry="2.9" fill="#735436"/><ellipse cx="14.9" cy="26.1" rx="2.1" ry="2.8" fill="#664a2e"/><ellipse cx="16.2" cy="6.2" rx="2.6" ry="2.4" fill="#664a2e"/><ellipse cx="30.2" cy="30.6" rx="2.5" ry="1.2" fill="#664a2e"/><ellipse cx="24.7" cy="31.3" rx="1.8" ry="2.4" fill="#84623f"/><ellipse cx="21.3" cy="14.6" rx="2.7" ry="2.9" fill="#6e5032"/><ellipse cx="7.7" cy="12.7" rx="1.9" ry="2.4" fill="#735436"/><ellipse cx="2.9" cy="23.4" rx="2.1" ry="2.9" fill="#6e5032"/><ellipse cx="9.7" cy="31.4" rx="1.7" ry="2.8" fill="#735436"/><ellipse cx="27.6" cy="10.3" rx="1.9" ry="1.2" fill="#7f5e3c"/><ellipse cx="5.7" cy="1.1" rx="1.4" ry="2.3" fill="#84623f"/><ellipse cx="34.6" cy="19.2" rx="2.2" ry="2.0" fill="#84623f"/><ellipse cx="8.0" cy="23.7" rx="1.2" ry="3.0" fill="#7f5e3c"/><ellipse cx="25.9" cy="6.8" rx="2.5" ry="1.8" fill="#8c6a46"/><ellipse cx="31.3" cy="28.8" rx="1.1" ry="2.2" fill="#6e5032"/><ellipse cx="22.3" cy="18.0" rx="2.3" ry="1.4" fill="#664a2e"/><ellipse cx="34.0" cy="33.7" rx="1.1" ry="2.3" fill="#664a2e"/><ellipse cx="12.3" cy="23.9" rx="2.8" ry="2.8" fill="#8c6a46"/><ellipse cx="9.9" cy="9.1" rx="1.8" ry="1.5" fill="#84623f"/><ellipse cx="30.4" cy="9.8" rx="2.2" ry="1.6" fill="#735436"/><ellipse cx="24.2" cy="8.4" rx="2.0" ry="2.2" fill="#6e5032"/><ellipse cx="16.9" cy="31.6" rx="1.6" ry="1.5" fill="#735436"/><ellipse cx="32.9" cy="28.9" rx="1.1" ry="2.7" fill="#664a2e"/><ellipse cx="28.6" cy="18.7" rx="2.5" ry="2.3" fill="#735436"/><ellipse cx="28.1" cy="11.3" rx="1.7" ry="1.3" fill="#84623f"/><ellipse cx="7.8" cy="30.5" rx="2.0" ry="1.3" fill="#664a2e"/><ellipse cx="20.7" cy="13.1" rx="1.5" ry="2.7" fill="#7f5e3c"/><ellipse cx="0.8" cy="26.8" rx="2.5" ry="1.8" fill="#6e5032"/><ellipse cx="1.5" cy="11.5" rx="2.0" ry="1.4" fill="#84623f"/><ellipse cx="19.9" cy="25.2" rx="1.4" ry="1.4" fill="#735436"/><ellipse cx="3.1" cy="23.1" rx="2.9" ry="2.7" fill="#84623f"/><ellipse cx="25.0" cy="3.7" rx="1.8" ry="1.1" fill="#8c6a46"/><ellipse cx="23.4" cy="26.3" rx="1.7" ry="2.6" fill="#84623f"/><ellipse cx="2.5" cy="13.6" rx="1.3" ry="1.9" fill="#8c6a46"/><ellipse cx="5.6" cy="3.1" rx="2.7" ry="1.6" fill="#8c6a46"/><ellipse cx="11.3" cy="0.5" rx="1.1" ry="1.8" fill="#664a2e"/><path d="M0 30 L35 24 M0 20 L35 12 M6 35 L35 29" stroke="#5e4428" stroke-width=".5" fill="none"/><path d="M-1 -1 H6 L7 2.4 L-1 5Z" fill="#cbbb46"/><rect x="8.4" y="-1" width="5.8" height="5.4" rx="1.2" fill="#646466"/><rect x="9.6" y="-1" width="3.2" height="3" fill="#8a8a8c"/><rect x="20.4" y="-1" width="4.6" height="6.4" rx="1.2" fill="#54565a"/><path d="M26 1 L36 -1 V20 L32 19.4Z" fill="#9a9a98"/><path d="M28 3 L35.5 2 V14 L31 13Z" fill="#b2b2b0"/><path d="M27 2 L35 10 M29 1 L35.5 7" stroke="#84848a" stroke-width=".5"/><path d="M-1 6 L7 3.4 L13 8 L4.6 20.6 L-1 18Z" fill="#232527"/><path d="M0 9 L6.6 6 L10.6 9 L4 18 L0 16.6Z" fill="#a29e8a"/><path d="M0.6 10.6 L7 7.4 M0.6 12.4 L8.4 8.4 M0.6 14.4 L9 9.8 M1.4 16.4 L8.6 11.6 M3 17.6 L7.4 14" stroke="#34342f" stroke-width=".8"/><path d="M2 9.4 L4 17.4 M4.2 8 L6.4 15.4 M6.4 7.2 L8.6 12.6" stroke="#34342f" stroke-width=".6"/><path d="M18.4 4.6 L20 4 L31 17.6 L29.4 19Z" fill="#101012"/><path d="M25 11.6 L27.2 11 L31.2 17 L29.6 18.6Z" fill="#2a2a32"/><path d="M18.4 4.6 L20 4 L21.4 5.8 L19.8 6.4Z" fill="#5a5a60"/><path d="M10.4 14.6 L21.6 10.4 L26.6 24.6 L14.4 29.6Z" fill="#d3cd58"/><path d="M11.6 15.4 L21 12 L23 17.4 L13.4 21Z" fill="#dcd666"/><path d="M14 29 L26.2 24 L26.8 25.6 L14.6 30.8Z" fill="#a4a038"/><ellipse cx="18.5" cy="19.6" rx="4.2" ry="4.8" transform="rotate(-20 18.5 19.6)" fill="none" stroke="#66662c" stroke-width=".6"/><path d="M16 17 L16.6 22.6 M18 18.6 Q20 17.6 19.6 20 Q19 22 17.6 22 M21 16.6 L20.6 18.6 L22 18.6 M21.6 16.6 V21" stroke="#444424" stroke-width=".65" fill="none"/><path d="M-1 23 L4 22 L6.6 27 L5 36 H-1Z" fill="#6a6a72"/><path d="M0 25 L3.6 24.4 L4.6 29 L1 32Z" fill="#82828a"/><path d="M27 25 L31 21 L36 22 V36 H26Z" fill="#c2bc6a"/><path d="M30 24 L34.4 23 L35.4 30 L31 33Z" fill="#dcd892"/><path d="M27.4 27 L30 33 M32 23 L33 28" stroke="#9c984c" stroke-width=".6"/></g></svg></div>

<!-- scrollbar -->
<div class="abs" style="left:135.5px;top:386px;width:410px;height:5px;border-radius:3px;background:#c3c3c3"></div>

<div class="t" style="top:16.99px;font-size:11px;color:#1c2b33;letter-spacing:-0.085px;left:18.00px;">Ad name contains all of</div>
<div class="t" style="top:16.99px;font-size:11px;color:#1c2b33;font-weight:700;-webkit-text-stroke:0.3px currentColor;letter-spacing:0.139px;left:137.20px;">Longform</div>
<div class="t" style="top:16.99px;font-size:11px;color:#5f6b75;letter-spacing:-0.243px;left:231.30px;">Search to filter by: name, ID or metrics</div>
<div class="t" style="top:54.24px;font-size:12px;color:#1c2b33;font-weight:700;-webkit-text-stroke:0.15px currentColor;letter-spacing:-0.230px;left:37.90px;">Campaigns</div>
<div class="t" style="top:54.79px;font-size:11px;color:#fff;letter-spacing:-0.128px;left:114.00px;">2 selected</div>
<div class="t" style="top:54.24px;font-size:12px;color:#1c2b33;font-weight:700;-webkit-text-stroke:0.15px currentColor;letter-spacing:-0.310px;left:233.50px;">Ad sets</div>
<div class="t" style="top:54.79px;font-size:11px;color:#fff;letter-spacing:-0.128px;left:288.00px;">2 selected</div>
<div class="t" style="top:52.64px;font-size:12px;color:#2f6fb8;font-weight:700;-webkit-text-stroke:0.15px currentColor;letter-spacing:-0.234px;left:410.75px;">Ads for 2 Ad sets</div>
<div class="t" style="top:89.69px;font-size:11px;color:#fff;letter-spacing:-0.106px;left:35.25px;">Create</div>
<div class="t" style="top:89.69px;font-size:11px;color:#7d8890;letter-spacing:0.018px;left:114.25px;">Duplicate</div>
<div class="t" style="top:89.69px;font-size:11px;color:#7d8890;letter-spacing:0.177px;left:207.00px;">Edit</div>
<div class="t" style="top:89.69px;font-size:11px;color:#1c2b33;letter-spacing:0.281px;left:279.50px;">A/B test</div>
<div class="t" style="top:89.69px;font-size:11px;color:#1c2b33;letter-spacing:-0.271px;left:351.50px;">More</div>
<div class="t" style="top:89.69px;font-size:11px;color:#1c2b33;left:717.60px;">Columns</div>
<div class="t" style="top:121.69px;font-size:11px;color:#1c2b33;font-weight:700;-webkit-text-stroke:0.3px currentColor;letter-spacing:0.200px;left:46.70px;">Off /</div>
<div class="t" style="top:135.69px;font-size:11px;color:#1c2b33;font-weight:700;-webkit-text-stroke:0.3px currentColor;letter-spacing:-0.800px;left:46.70px;">On</div>
<div class="t" style="top:128.29px;font-size:11px;color:#1c2b33;font-weight:700;-webkit-text-stroke:0.3px currentColor;letter-spacing:-0.800px;left:118.25px;">Ad</div>
<div class="t" style="top:128.19px;font-size:11px;color:#2f6fb8;font-weight:700;-webkit-text-stroke:0.3px currentColor;right:321.70px;z-index:1;">Results</div>
<div class="t" style="top:121.69px;font-size:11px;color:#1c2b33;font-weight:700;-webkit-text-stroke:0.3px currentColor;letter-spacing:-0.361px;left:465.90px;z-index:1;">Cost per</div>
<div class="t" style="top:135.69px;font-size:11px;color:#1c2b33;font-weight:700;-webkit-text-stroke:0.3px currentColor;letter-spacing:-0.174px;left:465.90px;z-index:1;">result</div>
<div class="t" style="top:128.29px;font-size:11px;color:#1c2b33;font-weight:700;-webkit-text-stroke:0.3px currentColor;letter-spacing:-0.758px;left:577.00px;z-index:1;">Reach</div>
<div class="t" style="top:128.29px;font-size:11px;color:#1c2b33;font-weight:700;-webkit-text-stroke:0.3px currentColor;letter-spacing:-0.798px;left:688.70px;z-index:1;">Freque</div>
<div class="t" style="top:156.94px;font-size:11px;color:#1c2b33;letter-spacing:0.055px;left:157.50px;">Longform 1417067000427128</div>
<div class="t du" style="top:156.94px;font-size:11px;color:#1c2b33;letter-spacing:0.250px;right:270.50px;z-index:1;">45</div>
<div class="t du" style="top:156.94px;font-size:11px;color:#1c2b33;letter-spacing:0.269px;right:159.73px;z-index:1;">€23.54</div>
<div class="t" style="top:156.94px;font-size:11px;color:#1c2b33;letter-spacing:-0.181px;right:46.18px;z-index:1;">18,268</div>
<div class="t" style="top:172.63px;font-size:9.3px;color:#67737d;right:270.75px;z-index:1;">Website purchases</div>
<div class="t" style="top:172.63px;font-size:9.3px;color:#67737d;letter-spacing:-0.212px;right:160.21px;z-index:1;">Per Purchase</div>
<div class="t" style="top:191.94px;font-size:11px;color:#1c2b33;letter-spacing:-0.018px;left:157.50px;">Longform 1417071403760021</div>
<div class="t du" style="top:191.94px;font-size:11px;color:#1c2b33;letter-spacing:-0.500px;right:271.25px;z-index:1;">23</div>
<div class="t du" style="top:191.94px;font-size:11px;color:#1c2b33;letter-spacing:0.269px;right:159.73px;z-index:1;">€29.22</div>
<div class="t" style="top:191.94px;font-size:11px;color:#1c2b33;letter-spacing:0.367px;right:45.63px;z-index:1;">9,029</div>
<div class="t" style="top:207.63px;font-size:9.3px;color:#67737d;right:270.75px;z-index:1;">Website purchases</div>
<div class="t" style="top:207.63px;font-size:9.3px;color:#67737d;letter-spacing:-0.212px;right:160.21px;z-index:1;">Per Purchase</div>
<div class="t" style="top:226.94px;font-size:11px;color:#1c2b33;letter-spacing:-0.165px;left:157.50px;">Longform Wake Up skool HQ - Copy</div>
<div class="t du" style="top:226.94px;font-size:11px;color:#1c2b33;right:270.75px;z-index:1;">2</div>
<div class="t du" style="top:226.94px;font-size:11px;color:#1c2b33;letter-spacing:0.242px;right:159.76px;z-index:1;">€9.33</div>
<div class="t" style="top:226.94px;font-size:11px;color:#1c2b33;letter-spacing:-0.008px;right:46.01px;z-index:1;">2,367</div>
<div class="t" style="top:242.63px;font-size:9.3px;color:#67737d;right:270.75px;z-index:1;">Website purchases</div>
<div class="t" style="top:242.63px;font-size:9.3px;color:#67737d;letter-spacing:-0.212px;right:160.21px;z-index:1;">Per Purchase</div>
<div class="t" style="top:261.94px;font-size:11px;color:#1c2b33;letter-spacing:-0.036px;left:157.50px;">Longform Danny Asleep Selfie</div>
<div class="t du" style="top:261.94px;font-size:11px;color:#1c2b33;right:270.75px;z-index:1;">2</div>
<div class="t du" style="top:261.94px;font-size:11px;color:#1c2b33;letter-spacing:0.069px;right:159.93px;z-index:1;">€10.35</div>
<div class="t" style="top:261.94px;font-size:11px;color:#1c2b33;letter-spacing:0.320px;right:45.68px;z-index:1;">883</div>
<div class="t" style="top:277.63px;font-size:9.3px;color:#67737d;right:270.75px;z-index:1;">Website purchases</div>
<div class="t" style="top:277.63px;font-size:9.3px;color:#67737d;letter-spacing:-0.212px;right:160.21px;z-index:1;">Per Purchase</div>
<div class="t" style="top:296.94px;font-size:11px;color:#1c2b33;letter-spacing:-0.009px;left:157.50px;">Longform Danny Asleep Sticky Note</div>
<div class="t du" style="top:296.94px;font-size:11px;color:#1c2b33;right:270.75px;z-index:1;">1</div>
<div class="t du" style="top:296.94px;font-size:11px;color:#1c2b33;letter-spacing:-0.231px;right:160.23px;z-index:1;">€17.93</div>
<div class="t" style="top:296.94px;font-size:11px;color:#1c2b33;letter-spacing:-0.508px;right:46.51px;z-index:1;">2,163</div>
<div class="t" style="top:312.63px;font-size:9.3px;color:#67737d;right:270.75px;z-index:1;">Weebsite Purchase</div>
<div class="t" style="top:312.63px;font-size:9.3px;color:#67737d;letter-spacing:-0.212px;right:160.21px;z-index:1;">Per Purchase</div>
<div class="t" style="top:334.19px;font-size:11px;color:#1c2b33;letter-spacing:-0.088px;left:119.80px;">Results from 5 ads</div>
<div class="t" style="top:334.19px;font-size:11px;color:#1c2b33;letter-spacing:0.250px;right:268.75px;z-index:1;">73</div>
<div class="t du" style="top:334.19px;font-size:11px;color:#1c2b33;letter-spacing:0.469px;right:157.53px;z-index:1;">€24.50</div>
<div class="t du" style="top:334.19px;font-size:11px;color:#1c2b33;letter-spacing:0.469px;right:43.53px;z-index:1;">25,385</div>
<div class="t" style="top:350.13px;font-size:9.3px;color:#67737d;right:269.00px;z-index:1;">Website purchases</div>
<div class="t" style="top:350.13px;font-size:9.3px;color:#67737d;letter-spacing:-0.212px;right:158.71px;z-index:1;">Per Purchase</div>
<div class="t" style="top:350.13px;font-size:9.3px;color:#67737d;letter-spacing:-0.009px;right:44.01px;z-index:1;">Accounts Center acco...</div>
<div class="t" style="top:350.13px;font-size:9.3px;color:#67737d;left:688.50px;z-index:1;">Per Accounts</div>
</body>
</html>
